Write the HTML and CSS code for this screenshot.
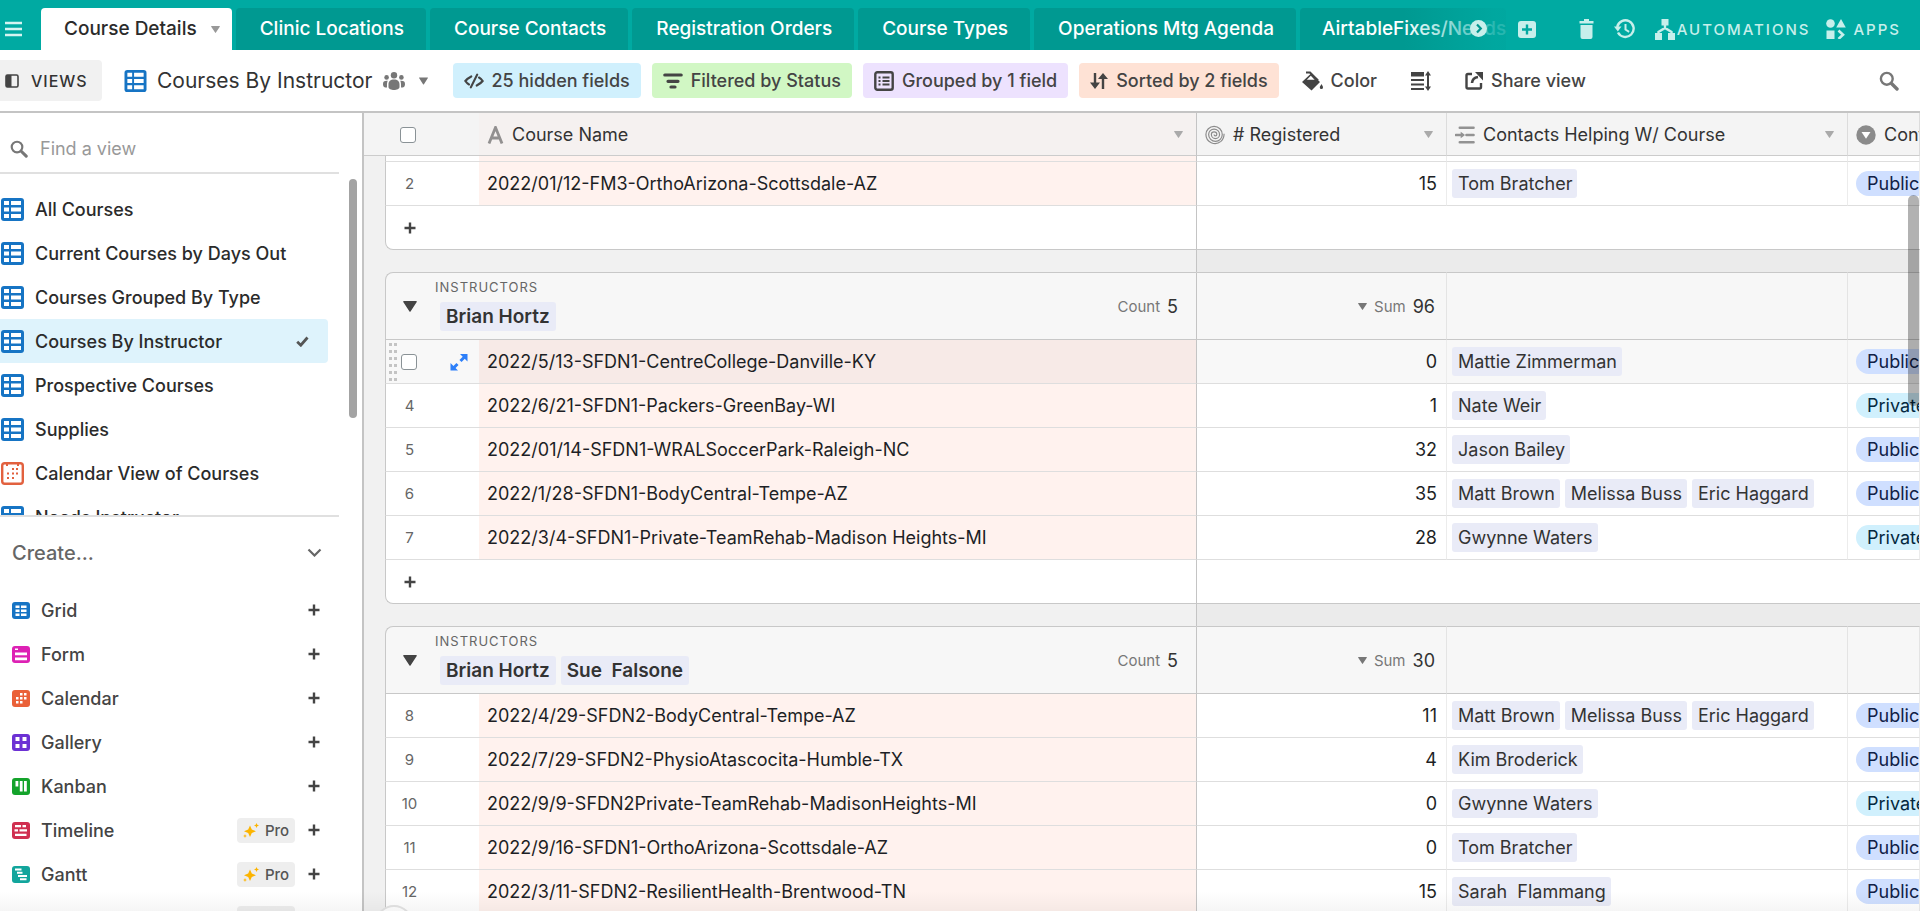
FILE: index.html
```html
<!DOCTYPE html>
<html lang="en">
<head>
<meta charset="utf-8">
<title>Course Details – Courses By Instructor</title>
<link rel="stylesheet" href="styles.css">
</head>
<body>
<svg class="sprite" aria-hidden="true">
  <symbol id="i-grid" viewBox="0 0 23 23"><rect width="23" height="23" rx="3" fill="#1674c4"/><path fill="#fff" d="M3 3h5v4H3zM10 3h10v4H10zM3 9.500h5v4H3zM10 9.500h10v4H10zM3 16h5v4H3zM10 16h10v4H10z"/></symbol>
  <symbol id="i-cal-line" viewBox="0 0 23 23"><rect x="1.200" y="1.200" width="20.600" height="20.600" rx="2.500" fill="#fff" stroke="#e2613f" stroke-width="2.400"/><path fill="#e2613f" d="M5 1h2v3H5zM16 1h2v3h-2zM11 6h2v2h-2zM15 6h2v2h-2zM6 10.500h2v2H6zM11 10.500h2v2h-2zM15 10.500h2v2h-2zM6 15h2v2H6zM11 15h2v2h-2z"/></symbol>
  <symbol id="i-search" viewBox="0 0 20 20"><circle cx="7.800" cy="7.800" r="5.900" fill="none" stroke="currentColor" stroke-width="2.400"/><path d="M12.500 12.500l5.500 5.500" stroke="currentColor" stroke-width="3.400" stroke-linecap="round"/></symbol>
  <symbol id="i-caret" viewBox="0 0 10 8"><path fill="currentColor" d="M.5 0h9a.5.5 0 0 1 .4.8L5.500 7.500a.6.6 0 0 1-1 0L.1.8A.5.5 0 0 1 .5 0z"/></symbol>
  <symbol id="i-plus" viewBox="0 0 12 12"><path d="M6 .5v11M.5 6h11" stroke="currentColor" stroke-width="2.400"/></symbol>
  <symbol id="i-star" viewBox="0 0 16 15"><path fill="#fcb400" d="M7 2.500l1.800 4 4.200 1.800-4.200 1.700L7 14l-1.800-4L1 8.300l4.200-1.800zM13.500 0l.8 1.700 1.700.8-1.700.8-.8 1.700-.8-1.700-1.700-.8 1.700-.8zM2 11l.6 1.400 1.400.6-1.400.6L2 15l-.6-1.400L0 13l1.400-.6z"/></symbol>
</svg>

<header class="topbar">
  <button class="menu" aria-label="Menu"><svg width="17" height="16" viewBox="0 0 17 16"><path d="M0 2h17M0 8h17M0 14h17" stroke="currentColor" stroke-width="2.600"/></svg></button>
  <nav class="tabs" aria-label="Tables">
    <button class="tab tab-active">Course Details<svg class="caret" width="9" height="7"><use href="#i-caret"/></svg></button>
    <button class="tab">Clinic Locations</button>
    <button class="tab">Course Contacts</button>
    <button class="tab">Registration Orders</button>
    <button class="tab">Course Types</button>
    <button class="tab">Operations Mtg Agenda</button>
    <button class="tab tab-last">AirtableFixes/Needs</button>
    <button class="next" aria-label="Scroll tables"><svg width="17" height="17" viewBox="0 0 17 17"><circle cx="8.500" cy="8.500" r="8.500" fill="#c7efeb"/><path d="M7 4.500l3.800 4-3.800 4" fill="none" stroke="#00958e" stroke-width="2.200"/></svg></button>
  </nav>
  <div class="base-tools">
    <button class="tool tool-add" aria-label="Add table"><svg width="18" height="17" viewBox="0 0 18 17"><rect width="18" height="17" rx="3" fill="currentColor"/><path d="M9 3.500v10M4 8.500h10" stroke="#00a9a1" stroke-width="2.400"/></svg></button>
    <button class="tool" aria-label="Trash"><svg width="15" height="20" viewBox="0 0 15 20"><path fill="currentColor" d="M5 0h5v2h4.500v2.500H.5V2H5zM1.500 6h12v12a2 2 0 0 1-2 2h-8a2 2 0 0 1-2-2z"/></svg></button>
    <button class="tool" aria-label="History"><svg width="21" height="20" viewBox="0 0 21 20"><path d="M4 13.500A8.300 8.300 0 1 0 3.200 8" fill="none" stroke="currentColor" stroke-width="2.400"/><path d="M0 7.500h7.500L3.800 12.500z" fill="currentColor"/><path d="M11.500 5v5.500l3.600 2.300" fill="none" stroke="currentColor" stroke-width="2"/></svg></button>
    <button class="tool tool-auto"><svg width="20" height="21" viewBox="0 0 20 21"><path fill="currentColor" d="M6.500 0h7v6.500h-7zM0 14h7v7H0zM13 14h7v7h-7z"/><path d="M10 6v4M3.500 15v-2l6.500-4 6.500 4v2" fill="none" stroke="currentColor" stroke-width="2.400"/></svg>AUTOMATIONS</button>
    <button class="tool tool-apps"><svg width="20" height="20" viewBox="0 0 20 20"><circle cx="4.500" cy="4.500" r="4.300" fill="currentColor"/><path fill="currentColor" d="M15 0l4.800 8.500h-9.600zM.5 11.500h8V20h-8z"/><path d="M12.500 11.500l4.500 4.200-4.500 4.200" fill="none" stroke="currentColor" stroke-width="2.600"/></svg>APPS</button>
  </div>
</header>

<div class="toolbar">
  <button class="views"><svg width="14" height="14" viewBox="0 0 14 14"><rect x="1" y="1" width="12" height="12" rx="1.500" fill="none" stroke="#444" stroke-width="1.600"/><path fill="#444" d="M1 1h5.500v12H1z"/></svg>VIEWS</button>
  <button class="view-name"><svg width="23" height="22"><use href="#i-grid"/></svg><span>Courses By Instructor</span>
    <svg width="22" height="18" viewBox="0 0 22 18"><g fill="#777"><circle cx="11" cy="3.300" r="3.200"/><circle cx="3.600" cy="5.400" r="2.300"/><circle cx="18.400" cy="5.400" r="2.300"/><path d="M5.500 12.500c0-3.500 2-5 5.500-5s5.500 1.500 5.500 5V15c0 4-11 4-11 0zM0 12c0-2.500 1.200-3.500 4.800-3.300C4 10 3.900 12 4 15.500 1.500 15.500 0 15 0 12zM22 12c0-2.500-1.200-3.500-4.800-3.300.8 1.300.9 3.300.8 6.800 2.500 0 4-.5 4-3.500z"/></g></svg>
    <svg class="name-caret" width="9" height="8"><use href="#i-caret"/></svg></button>
  <div class="filters">
    <button class="pill-btn blue"><svg width="20" height="16" viewBox="0 0 22 16"><path d="M8 3C5 4.500 3 6 1.500 8c1 1.500 2.300 2.800 4 3.800M14 13c3-1.500 5-3 6.500-5-1-1.500-2.300-2.800-4-3.800M14.500 1L7.500 15" fill="none" stroke="currentColor" stroke-width="2.400" stroke-linecap="round"/></svg>25 hidden fields</button>
    <button class="pill-btn green"><svg width="20" height="16" viewBox="0 0 20 16"><path d="M1.800 2h16.400M5 8.300h10M8 14h4" stroke="currentColor" stroke-width="3.200" stroke-linecap="round"/></svg>Filtered by Status</button>
    <button class="pill-btn purple"><svg width="20" height="20" viewBox="0 0 20 20"><rect x="1.300" y="1.300" width="17.400" height="17.400" rx="2" fill="none" stroke="currentColor" stroke-width="2.400"/><path d="M4.500 6.500h2M4.500 10h2M4.500 13.500h2M8.500 6.500h7M8.500 10h7M8.500 13.500h7" stroke="currentColor" stroke-width="2"/></svg>Grouped by 1 field</button>
    <button class="pill-btn peach"><svg width="18" height="18" viewBox="0 0 18 18"><path d="M5 1v13M13 17V4" stroke="currentColor" stroke-width="2.400"/><path fill="currentColor" d="M0 10.500h10L5 17zM8 7h10L13 1z"/></svg>Sorted by 2 fields</button>
  </div>
  <button class="plain"><svg width="21" height="20" viewBox="0 0 21 20"><path fill="currentColor" d="M9 2.500L18 11l-8.500 8.500L0 11zM19.500 13c1 1.800 1.500 2.600 1.500 3.500a1.500 1.500 0 0 1-3.200 0c0-.9.700-1.700 1.700-3.500z"/><path d="M4 1.500h4l8 8" fill="none" stroke="currentColor" stroke-width="2.200"/><path fill="#fff" d="M8.800 4.800l3.800 4H4.800z"/></svg>Color</button>
  <button class="plain" aria-label="Row height"><svg width="20" height="20" viewBox="0 0 20 20"><path fill="currentColor" d="M0 1h13v4.500H0zM0 8h13v2H0zM0 12.500h13v2H0zM0 17h13v2H0zM17 0l3 4.500h-6zM17 20l3-4.500h-6z"/><path d="M17 3v14" stroke="currentColor" stroke-width="2"/></svg></button>
  <button class="plain"><svg width="18" height="18" viewBox="0 0 18 18"><path d="M7 2H3a1.500 1.500 0 0 0-1.500 1.500v11.500A1.500 1.500 0 0 0 3 16.500h11.500A1.500 1.500 0 0 0 16 15v-4" fill="none" stroke="currentColor" stroke-width="2.400"/><path d="M7 11c.3-3.500 2.500-5.500 6-6" fill="none" stroke="currentColor" stroke-width="2.600"/><path fill="currentColor" d="M10 0h8v8.500z"/></svg>Share view</button>
  <button class="find-btn" aria-label="Search"><svg width="20" height="20"><use href="#i-search"/></svg></button>
</div>

<div class="workspace">
  <aside class="sidebar">
    <label class="find"><svg width="18" height="18"><use href="#i-search"/></svg><input type="text" placeholder="Find a view" aria-label="Find a view"></label>
    <div class="views-area">
      <ul class="view-list">
        <li><a href="#all"><svg width="23" height="23"><use href="#i-grid"/></svg>All Courses</a></li>
        <li><a href="#days"><svg width="23" height="23"><use href="#i-grid"/></svg>Current Courses by Days Out</a></li>
        <li><a href="#type"><svg width="23" height="23"><use href="#i-grid"/></svg>Courses Grouped By Type</a></li>
        <li><a class="current" href="#instructor"><svg width="23" height="23"><use href="#i-grid"/></svg>Courses By Instructor<svg class="tick" width="13" height="11" viewBox="0 0 13 11"><path d="M1.200 5.800l3.600 3.400L11.500 1.500" fill="none" stroke="#555" stroke-width="2.800"/></svg></a></li>
        <li><a href="#prospective"><svg width="23" height="23"><use href="#i-grid"/></svg>Prospective Courses</a></li>
        <li><a href="#supplies"><svg width="23" height="23"><use href="#i-grid"/></svg>Supplies</a></li>
        <li><a href="#calendar"><svg width="23" height="23"><use href="#i-cal-line"/></svg>Calendar View of Courses</a></li>
        <li><a href="#needs"><svg width="23" height="23"><use href="#i-grid"/></svg>Needs Instructor</a></li>
      </ul>
      <span class="side-thumb"></span>
    </div>
    <button class="create-head">Create...<svg width="15" height="9" viewBox="0 0 15 9"><path d="M1.500 1.500l6 6 6-6" fill="none" stroke="currentColor" stroke-width="2.200"/></svg></button>
    <ul class="create-list">
      <li><button><svg width="18" height="17" viewBox="0 0 18 17"><rect width="18" height="17" rx="3" fill="#1674c4"/><path fill="#fff" d="M3.500 3.500h4v2.500h-4zM9 3.500h5.500v2.500H9zM3.500 7.500h4V10h-4zM9 7.500h5.500V10H9zM3.500 11.500h4V14h-4zM9 11.500h5.500V14H9z"/></svg><span>Grid</span><svg class="plus" width="12" height="12"><use href="#i-plus"/></svg></button></li>
      <li><button><svg width="18" height="17" viewBox="0 0 18 17"><rect width="18" height="17" rx="3" fill="#dd21b4"/><path fill="#fff" d="M3 2.500h3v1.500H3zM3 6.500h12v2.800H3zM3 11.500h12v2.800H3z"/></svg><span>Form</span><svg class="plus" width="12" height="12"><use href="#i-plus"/></svg></button></li>
      <li><button><svg width="18" height="17" viewBox="0 0 18 17"><rect width="18" height="17" rx="3" fill="#ea6138"/><path fill="#fff" d="M8 3h2.500v2.500H8zM12 3h2.500v2.500H12zM4 7h2.500v2.500H4zM8 7h2.500v2.500H8zM12 7h2.500v2.500H12zM4 11h2.500v2.500H4zM8 11h2.500v2.500H8z"/></svg><span>Calendar</span><svg class="plus" width="12" height="12"><use href="#i-plus"/></svg></button></li>
      <li><button><svg width="18" height="17" viewBox="0 0 18 17"><rect width="18" height="17" rx="3" fill="#6c31d4"/><path fill="#fff" d="M3.500 3h4v4h-4zM10.500 3h4v4h-4zM3.500 10h4v4h-4zM10.500 10h4v4h-4z"/></svg><span>Gallery</span><svg class="plus" width="12" height="12"><use href="#i-plus"/></svg></button></li>
      <li><button><svg width="18" height="17" viewBox="0 0 18 17"><rect width="18" height="17" rx="3" fill="#14a32b"/><path fill="#fff" d="M3.500 3h2.800v5.500H3.500zM7.800 3h2.800v10.500H7.800zM12 3h2.800v10.500H12z"/></svg><span>Kanban</span><svg class="plus" width="12" height="12"><use href="#i-plus"/></svg></button></li>
      <li><button><svg width="18" height="17" viewBox="0 0 18 17"><rect width="18" height="17" rx="3" fill="#d02f50"/><path fill="#fff" d="M3 3h6v2.200H3zM10.500 3H14v2.200h-3.500zM2.500 7.300H6v2.200H2.500zM7.500 7.300H15v2.200H7.500zM3 11.700h11.500v2.200H3z"/></svg><span>Timeline</span><span class="pro"><svg width="16" height="15"><use href="#i-star"/></svg>Pro</span><svg class="plus" width="12" height="12"><use href="#i-plus"/></svg></button></li>
      <li><button><svg width="18" height="17" viewBox="0 0 18 17"><rect width="18" height="17" rx="3" fill="#12a59c"/><path fill="#fff" d="M3 2.500h6.500v2H3zM5 5.800h5.500v2H5zM6 9h9v2H6zM8 12.300h6.500v2H8z"/></svg><span>Gantt</span><span class="pro"><svg width="16" height="15"><use href="#i-star"/></svg>Pro</span><svg class="plus" width="12" height="12"><use href="#i-plus"/></svg></button></li>
      <li><button><span></span><span class="pro"></span><span class="plus-space"></span></button></li>
    </ul>
  </aside>

  <main class="grid-area">
    <table class="grid">
      <colgroup><col class="c-gutter"><col class="c-num"><col class="c-name"><col class="c-reg"><col class="c-contacts"><col class="c-control"></colgroup>
      <thead>
        <tr>
          <th></th>
          <th class="sel"><input type="checkbox" aria-label="Select all rows"></th>
          <th class="name"><div class="th"><svg width="17" height="18" viewBox="0 0 16 18"><path d="M1.500 17.500L8 1.500l6.500 16M3.800 12h8.400" fill="none" stroke="#929090" stroke-width="2.800"/></svg><span>Course Name</span><svg class="hc" width="9" height="7"><use href="#i-caret"/></svg></div></th>
          <th class="reg"><div class="th"><svg width="20" height="20" viewBox="-1 0 22 21"><path d="M9 10a1.500 1.500 0 0 0 3 0a3 3 0 0 0-6 0a4.500 4.500 0 0 0 9 0a6 6 0 0 0-12 0a7.500 7.500 0 0 0 15 0a9 9 0 0 0-18 0a10 10 0 0 0 16.500 7.500c2.200-2 3.500-5 3.500-8.500" fill="none" stroke="#8b8b8b" stroke-width="1.300"/></svg><span># Registered</span><svg class="hc" width="9" height="7"><use href="#i-caret"/></svg></div></th>
          <th><div class="th"><svg width="20" height="18" viewBox="0 0 21 18"><path d="M5 1.500h14.500M12 9h7.500M5 16.500h14.500M1 9h7" stroke="#929292" stroke-width="2.600" stroke-linecap="round"/><path fill="#929292" d="M6 5.500L10.500 9 6 12.500z"/></svg><span>Contacts Helping W/ Course</span><svg class="hc" width="9" height="7"><use href="#i-caret"/></svg></div></th>
          <th><div class="th"><svg width="20" height="20" viewBox="0 0 20 20"><circle cx="10" cy="10" r="9.700" fill="#8b8b8b"/><path fill="#fff" d="M5.500 7h9L10 13.800z"/></svg><span>Control</span></div></th>
        </tr>
      </thead>
      <tbody>
        <tr class="sliver"><td></td><td class="num"></td><td class="name"></td><td class="reg"></td><td></td><td></td></tr>
        <tr class="row"><td></td><td class="num">2</td><td class="name">2022/01/12-FM3-OrthoArizona-Scottsdale-AZ</td><td class="reg">15</td><td><div class="chips"><span>Tom Bratcher</span></div></td><td><span class="tag public">Public</span></td></tr>
        <tr class="add"><td></td><td class="num"><button aria-label="Add record"><svg width="12" height="12"><use href="#i-plus"/></svg></button></td><td></td><td colspan="3"></td></tr>
        <tr class="gap"><td colspan="3"></td><td colspan="3"></td></tr>
      </tbody>
      <tbody>
        <tr class="group">
          <td></td>
          <td colspan="2" class="ghead"><div class="gh"><button class="fold" aria-label="Collapse group"><svg width="14" height="11"><use href="#i-caret"/></svg></button><div class="gtitle"><span class="glabel">INSTRUCTORS</span><div class="chips"><span>Brian Hortz</span></div></div><span class="agg">Count <b>5</b></span></div></td>
          <td class="reg"><div class="agg"><svg width="9" height="7"><use href="#i-caret"/></svg>Sum <b>96</b></div></td><td></td><td></td>
        </tr>
        <tr class="row hover"><td></td><td class="num"><div class="handle"><svg width="8" height="40" viewBox="0 0 8 40"><path d="M1.500 1v40M6.500 1v40" stroke="#c4c4c4" stroke-width="3" stroke-dasharray="3 4"/></svg><input type="checkbox" aria-label="Select row 3"><svg class="expand" width="18" height="18" viewBox="0 0 18 18"><g fill="#2d7ff9"><path d="M10 1h7.500v7.500zM.5 10V17.500H8z"/></g><path d="M14.500 4L10.500 8M3.500 15l4-4" stroke="#2d7ff9" stroke-width="3"/></svg></div></td><td class="name">2022/5/13-SFDN1-CentreCollege-Danville-KY</td><td class="reg">0</td><td><div class="chips"><span>Mattie Zimmerman</span></div></td><td><span class="tag public">Public</span></td></tr>
        <tr class="row"><td></td><td class="num">4</td><td class="name">2022/6/21-SFDN1-Packers-GreenBay-WI</td><td class="reg">1</td><td><div class="chips"><span>Nate Weir</span></div></td><td><span class="tag private">Private</span></td></tr>
        <tr class="row"><td></td><td class="num">5</td><td class="name">2022/01/14-SFDN1-WRALSoccerPark-Raleigh-NC</td><td class="reg">32</td><td><div class="chips"><span>Jason Bailey</span></div></td><td><span class="tag public">Public</span></td></tr>
        <tr class="row"><td></td><td class="num">6</td><td class="name">2022/1/28-SFDN1-BodyCentral-Tempe-AZ</td><td class="reg">35</td><td><div class="chips"><span>Matt Brown</span><span>Melissa Buss</span><span>Eric Haggard</span></div></td><td><span class="tag public">Public</span></td></tr>
        <tr class="row"><td></td><td class="num">7</td><td class="name">2022/3/4-SFDN1-Private-TeamRehab-Madison Heights-MI</td><td class="reg">28</td><td><div class="chips"><span>Gwynne Waters</span></div></td><td><span class="tag private">Private</span></td></tr>
        <tr class="add"><td></td><td class="num"><button aria-label="Add record"><svg width="12" height="12"><use href="#i-plus"/></svg></button></td><td></td><td colspan="3"></td></tr>
        <tr class="gap"><td colspan="3"></td><td colspan="3"></td></tr>
      </tbody>
      <tbody>
        <tr class="group">
          <td></td>
          <td colspan="2" class="ghead"><div class="gh"><button class="fold" aria-label="Collapse group"><svg width="14" height="11"><use href="#i-caret"/></svg></button><div class="gtitle"><span class="glabel">INSTRUCTORS</span><div class="chips"><span>Brian Hortz</span><span>Sue&nbsp; Falsone</span></div></div><span class="agg">Count <b>5</b></span></div></td>
          <td class="reg"><div class="agg"><svg width="9" height="7"><use href="#i-caret"/></svg>Sum <b>30</b></div></td><td></td><td></td>
        </tr>
        <tr class="row"><td></td><td class="num">8</td><td class="name">2022/4/29-SFDN2-BodyCentral-Tempe-AZ</td><td class="reg">11</td><td><div class="chips"><span>Matt Brown</span><span>Melissa Buss</span><span>Eric Haggard</span></div></td><td><span class="tag public">Public</span></td></tr>
        <tr class="row"><td></td><td class="num">9</td><td class="name">2022/7/29-SFDN2-PhysioAtascocita-Humble-TX</td><td class="reg">4</td><td><div class="chips"><span>Kim Broderick</span></div></td><td><span class="tag public">Public</span></td></tr>
        <tr class="row"><td></td><td class="num">10</td><td class="name">2022/9/9-SFDN2Private-TeamRehab-MadisonHeights-MI</td><td class="reg">0</td><td><div class="chips"><span>Gwynne Waters</span></div></td><td><span class="tag private">Private</span></td></tr>
        <tr class="row"><td></td><td class="num">11</td><td class="name">2022/9/16-SFDN1-OrthoArizona-Scottsdale-AZ</td><td class="reg">0</td><td><div class="chips"><span>Tom Bratcher</span></div></td><td><span class="tag public">Public</span></td></tr>
        <tr class="row"><td></td><td class="num">12</td><td class="name">2022/3/11-SFDN2-ResilientHealth-Brentwood-TN</td><td class="reg">15</td><td><div class="chips"><span>Sarah&nbsp; Flammang</span></div></td><td><span class="tag public">Public</span></td></tr>
      </tbody>
    </table>
    <span class="grid-thumb"></span>
    <span class="round-add"></span>
  </main>
  <span class="fade"></span>
</div>
</body>
</html>
```

FILE: styles.css
```css
* { box-sizing: border-box; }
body {
  margin: 0;
  height: 100vh;
  overflow: hidden;
  display: flex;
  flex-direction: column;
  background: #fff;
  color: #333;
  font-family: Inter, "Liberation Sans", sans-serif;
  font-size: 18px;
}
button, input { font: inherit; color: inherit; }
button { border: 0; background: none; padding: 0; white-space: nowrap; }
svg { display: block; flex: none; }
ul { list-style: none; margin: 0; padding: 0; }
.sprite { position: absolute; width: 0; height: 0; }

/* top bar */
.topbar {
  flex: none;
  height: 50px;
  display: flex;
  align-items: flex-end;
  background: #00aaa2;
  color: #c7efeb;
}
.menu { flex: none; width: 41px; height: 42px; padding-left: 5px; color: #d5f4f1; }
.tabs { position: relative; flex: none; display: flex; gap: 4px; }
.tab {
  height: 42px;
  padding: 0 22px 0 24px;
  border-radius: 4px 4px 0 0;
  background: #009991;
  color: #fff;
  font-size: 19px;
  font-weight: 500;
  line-height: 42px;
}
.tab-active {
  display: flex;
  align-items: center;
  gap: 14px;
  padding: 0 12px 0 23px;
  background: #fff;
  color: #2b2b2b;
}
.tab-active .caret { color: #999; }
.tab-last { position: relative; padding: 0 0 0 22px; }
.tab-last::after {
  content: "";
  position: absolute;
  inset: 0;
  background: linear-gradient(90deg, rgba(0, 170, 162, 0) 50%, rgba(0, 170, 162, .85) 95%);
}
.next { position: absolute; right: 19px; top: 12px; }
.base-tools { margin-left: auto; height: 42px; display: flex; align-items: center; padding-right: 19px; }
.tool { display: flex; align-items: center; margin-right: 20px; font-weight: 500; font-size: 15px; letter-spacing: 2px; }
.tool-add { margin-right: 43px; }
.tool-auto { gap: 2px; margin-right: 16px; }
.tool-apps { gap: 7px; margin-right: 0; }

/* view toolbar */
.toolbar {
  flex: none;
  height: 63px;
  display: flex;
  align-items: center;
  border-bottom: 2px solid #c4c4c4;
}
.views {
  width: 102px;
  height: 41px;
  display: flex;
  align-items: center;
  gap: 12px;
  padding-left: 5px;
  border-radius: 0 4px 4px 0;
  background: #f1f1f1;
  font-size: 16px;
  font-weight: 500;
  letter-spacing: 1px;
}
.view-name { display: flex; align-items: center; gap: 10px; margin-left: 22px; font-size: 21px; color: #333; }
.name-caret { margin-left: 4px; color: #777; }
.filters { display: flex; gap: 11px; margin: 0 23px 0 25px; }
.pill-btn { display: flex; align-items: center; gap: 8px; height: 35px; padding: 0 11px; border-radius: 4px; color: #444; font-weight: 500; }
.blue { background: #d0f0fd; }
.green { background: #d1f7c4; }
.purple { background: #ede2fe; }
.peach { background: #fee2d5; }
.plain { display: flex; align-items: center; gap: 8px; margin-right: 34px; color: #444; font-weight: 500; }
.find-btn { margin-left: auto; margin-right: 21px; color: #777; }

/* layout */
.workspace { position: relative; flex: 1; min-height: 0; display: flex; }
.sidebar { flex: none; width: 364px; border-right: 2px solid #c4c4c4; overflow: hidden; }
.find {
  display: flex;
  align-items: center;
  gap: 12px;
  width: 339px;
  height: 61px;
  padding: 12px 0 0 10px;
  border-bottom: 2px solid #e0e0e0;
  color: #777;
}
.find input { border: 0; outline: 0; padding: 0; width: 250px; background: none; }
.find input::placeholder { color: #999; opacity: 1; }
.views-area { position: relative; height: 343px; padding-top: 13px; overflow: hidden; }
.views-area::after { content: ""; position: absolute; left: 0; bottom: 0; width: 339px; height: 2px; background: #e0e0e0; }
.view-list a {
  display: flex;
  align-items: center;
  gap: 11px;
  width: 328px;
  height: 44px;
  padding: 0 19px 0 1px;
  border-radius: 0 4px 4px 0;
  color: #2b2b2b;
  font-weight: 500;
  text-decoration: none;
}
.view-list .current { background: #def3fc; }
.tick { margin-left: auto; }
.side-thumb { position: absolute; left: 349px; top: 5px; width: 8px; height: 239px; border-radius: 4px; background: #a3a3a3; }
.create-head {
  display: flex;
  align-items: center;
  justify-content: space-between;
  width: 339px;
  height: 71px;
  padding: 0 17px 0 12px;
  color: #666;
  font-size: 20px;
  font-weight: 500;
}
.create-list button {
  display: flex;
  align-items: center;
  width: 339px;
  height: 44px;
  padding: 0 19px 0 12px;
  gap: 11px;
  color: #444;
  font-weight: 500;
}
.create-list button > span:nth-of-type(1) { margin-right: auto; }
.plus { color: #444; }
.plus-space { width: 12px; }
.create-list .pro {
  display: flex;
  align-items: center;
  justify-content: center;
  gap: 6px;
  width: 58px;
  height: 25px;
  margin-right: 2px;
  border-radius: 4px;
  background: #eee;
  color: #555;
  font-size: 15px;
}

/* grid */
.grid-area { position: relative; flex: 1; min-width: 0; overflow: hidden; background: #f1f1f1; }
.grid { width: 100%; table-layout: fixed; border-collapse: separate; border-spacing: 0; color: #1d1f25; }
.c-gutter { width: 21px; }
.c-num { width: 94px; }
.c-reg { width: 250px; }
.c-contacts { width: 401px; }
.c-control { width: 72px; }
td, th { padding: 0; overflow: hidden; white-space: nowrap; text-align: left; }
th { height: 43px; padding-top: 1px; background: #f4f4f4; border-bottom: 1px solid #ccc; font-weight: 400; color: #333; }
th.name { background: #f5f1f0; }
th.name, td.name { border-right: 1px solid #c4c4c4; }
th:nth-child(n+4) { border-right: 1px solid #dcdcdc; }
th.sel { padding-left: 15px; }
.th { display: flex; align-items: center; gap: 8px; padding: 0 13px 0 8px; }
.hc { margin-left: auto; color: #aaa; }
input[type="checkbox"] {
  appearance: none;
  display: block;
  width: 16px;
  height: 16px;
  margin: 0;
  border: 1px solid #8a9296;
  border-radius: 3px;
  background: #fff;
}
.sliver td { height: 6px; }
.row td { height: 44px; }
.sliver td, .row td, .add td { background: #fff; border-bottom: 1px solid #dedede; }
.row td:nth-child(n+4), .sliver td:nth-child(n+4) { border-right: 1px solid #ececec; }
.sliver td:first-child, .row td:first-child, .add td:first-child, .group td:first-child { background: #f1f1f1; border-bottom: 0; }
td.num { padding-right: 46px; text-align: center; font-size: 15px; color: #666; }
.row .num, .sliver .num, .add .num { border-left: 1px solid #c8c8c8; }
.row .name, .sliver .name { background: #fff2ee; padding-left: 8px; }
.row td.reg { padding-right: 9px; text-align: right; }
.row.hover td:nth-child(n+2) { background: #f8f8f8; }
.row.hover td.name { background: #f7eae7; }
.row.hover .num { padding: 0; }
.handle { display: flex; align-items: center; gap: 4px; padding-left: 3px; }
.handle .expand { margin-left: 29px; }
.add td { height: 44px; border-bottom-color: #c8c8c8; }
.add .num { border-bottom-left-radius: 8px; }
.add td:nth-child(3) { border-right: 1px solid #c4c4c4; }
.add button { display: block; margin: 0 auto; color: #444; }
.gap td { height: 22px; }
.gap td:first-child { border-right: 1px solid #c4c4c4; }
.gap td:last-child { background: #ebebeb; }
.group td { height: 68px; background: #f7f7f7; border-top: 1px solid #c8c8c8; border-bottom: 1px solid #c8c8c8; border-right: 1px solid #e4e4e4; }
.group td:first-child { border: 0; }
.group td.ghead { border-left: 1px solid #c8c8c8; border-right-color: #c4c4c4; border-top-left-radius: 8px; }
.gh { display: flex; align-items: center; padding-right: 18px; }
.fold { width: 48px; padding-left: 17px; color: #444; }
.gtitle { flex: 1; padding-bottom: 2px; }
.glabel { display: block; padding-left: 1px; font-size: 13px; line-height: 14px; margin-bottom: 8px; letter-spacing: 1px; color: #666; }
.gtitle .chips { padding-left: 6px; font-size: 19px; font-weight: 600; }
.chips { display: flex; gap: 5px; padding-left: 5px; }
.chips span { padding: 0 5px 0 6px; border-radius: 3px; background: #e9ebf7; line-height: 29px; color: #333; }
.gtitle .chips span { padding: 0 6px; }
.agg { display: flex; align-items: center; justify-content: flex-end; gap: 7px; font-size: 15px; color: #777; }
.agg b { font-size: 18px; font-weight: 400; color: #333; }
.reg .agg { padding-right: 11px; }
.tag { display: inline-block; margin-left: 8px; padding: 0 11px; border-radius: 13px; line-height: 25px; color: #102046; }
.public { background: #cfdfff; }
.private { background: #d0f0fd; color: #04283f; }
.grid-thumb { position: absolute; right: 1px; top: 82px; width: 11px; height: 211px; border-radius: 6px; background: rgba(0, 0, 0, .3); }
.round-add { position: absolute; left: 11px; bottom: -32px; width: 38px; height: 38px; border: 2px solid #e4e4e4; border-radius: 50%; background: #fff; }
.fade { position: absolute; left: 0; right: 0; bottom: 0; height: 20px; background: linear-gradient(rgba(0, 0, 0, 0), rgba(0, 0, 0, .04)); pointer-events: none; }
```
